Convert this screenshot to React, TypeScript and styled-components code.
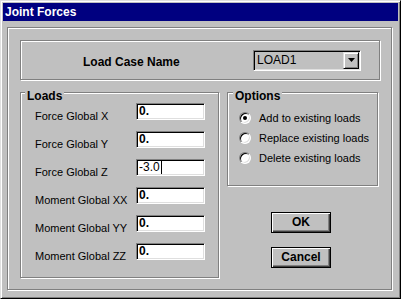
import React from 'react';
import styled, { createGlobalStyle } from 'styled-components';

const GlobalStyle = createGlobalStyle`
  html, body { margin: 0; padding: 0; background: #c0c0c0; }
  body { font-family: "Liberation Sans", Arial, sans-serif; }
  * { box-sizing: border-box; }
`;

const FONT = `"Liberation Sans", Arial, sans-serif`;

const Window = styled.div`
  width: 401px;
  height: 299px;
  background: #c0c0c0;
  border: 1px solid;
  border-color: #dfdfdf #000 #000 #dfdfdf;
  box-shadow: inset 1px 1px #fff, inset -1px -1px #808080;
  padding: 2px;
  display: flex;
  flex-direction: column;
`;

const TitleBar = styled.div`
  height: 18px;
  background: #000080;
  color: #fff;
  font: bold 12px/18px ${FONT};
  padding-left: 2px;
`;

const Body = styled.div`
  flex: 1;
  display: flex;
  padding: 6px 6px 6px 4px;
  min-height: 0;
`;

const Frame = styled.div`
  flex: 1;
  border: 1px solid #808080;
  box-shadow: inset 1px 1px #fff, 1px 1px #fff;
  padding: 12px 11px 0 12px;
  display: flex;
  flex-direction: column;
`;

const CaseGroup = styled.div`
  height: 40px;
  border: 1px solid #808080;
  box-shadow: inset 1px 1px #fff, 1px 1px #fff;
  display: flex;
  align-items: center;
  justify-content: space-between;
  padding: 0 18px 0 62px;
`;

const CaseLabel = styled.div`
  font: bold 12px/14px ${FONT};
  color: #000;
  margin-top: 3px;
`;

const Combo = styled.div`
  width: 108px;
  height: 21px;
  border: 1px solid;
  border-color: #808080 #fff #fff #808080;
  box-shadow: inset 1px 1px #000, inset -1px -1px #dfdfdf;
  padding: 1px;
  display: flex;
  align-items: stretch;
`;

const ComboText = styled.div`
  flex: 1;
  font: 12px/17px ${FONT};
  color: #000;
  padding-left: 2px;
`;

const ComboButton = styled.div`
  width: 16px;
  border: 1px solid;
  border-color: #dfdfdf #000 #000 #dfdfdf;
  box-shadow: inset 1px 1px #fff, inset -1px -1px #808080;
  display: flex;
  align-items: center;
  justify-content: center;
`;

const Row = styled.div`
  display: flex;
  gap: 8px;
  margin-top: 12px;
`;

const Group = styled.div<{ $w: number; $h: number }>`
  width: ${p => p.$w}px;
  height: ${p => p.$h}px;
  border: 1px solid #808080;
  box-shadow: inset 1px 1px #fff, 1px 1px #fff;
  display: flex;
  flex-direction: column;
`;

const Legend = styled.div<{ $ml: number }>`
  align-self: flex-start;
  margin: -4px 0 0 ${p => p.$ml}px;
  padding: 0 2px;
  background: #c0c0c0;
  font: bold 12px/14px ${FONT};
  color: #000;
`;

const FieldGrid = styled.div`
  display: grid;
  grid-template-columns: 1fr 69px;
  grid-auto-rows: 28px;
  padding: 0 13px 0 14px;
`;

const FieldLabel = styled.div`
  font: 11px/13px ${FONT};
  color: #000;
  margin-top: 7px;
  white-space: nowrap;
`;

const Field = styled.div<{ $bold?: boolean }>`
  height: 17px;
  background: #fff;
  border: 1px solid;
  border-color: #808080 #fff #fff #808080;
  box-shadow: inset 1px 1px #000, inset -1px -1px #dfdfdf;
  padding-left: 2px;
  font: ${p => (p.$bold ? 'bold' : 'normal')} 12px/15px ${FONT};
  color: #000;
  display: flex;
  align-items: center;
`;

const Caret = styled.span`
  display: inline-block;
  width: 1px;
  height: 13px;
  background: #000;
  margin-left: 1px;
`;

const RightCol = styled.div`
  width: 151px;
  display: flex;
  flex-direction: column;
`;

const RadioList = styled.div`
  display: flex;
  flex-direction: column;
  padding: 5px 0 0 11px;
`;

const RadioRow = styled.div`
  height: 20px;
  display: flex;
  align-items: center;
  gap: 8px;
`;

const RadioCircle = styled.div<{ $on?: boolean }>`
  width: 12px;
  height: 12px;
  border-radius: 50%;
  background: #fff;
  border: 1px solid;
  border-color: #808080 #fff #fff #808080;
  box-shadow: inset 1px 1px #000, inset -1px -1px #dfdfdf;
  display: flex;
  align-items: center;
  justify-content: center;
  &::after {
    content: '';
    display: ${p => (p.$on ? 'block' : 'none')};
    width: 4px;
    height: 4px;
    border-radius: 50%;
    background: #000;
  }
`;

const RadioLabel = styled.div`
  font: 11px/13px ${FONT};
  color: #000;
  white-space: nowrap;
`;

const Buttons = styled.div`
  display: flex;
  flex-direction: column;
  align-items: center;
  padding-right: 3px;
  margin-top: 26px;
  gap: 14px;
`;

const Button = styled.div`
  width: 60px;
  height: 21px;
  border: 1px solid #000;
  box-shadow: inset 1px 1px #fff, inset -1px -1px #404040, inset -2px -2px #808080;
  font: bold 12px/19px ${FONT};
  color: #000;
  text-align: center;
`;

const loads: { label: string; value: string; bold?: boolean; caret?: boolean }[] = [
  { label: 'Force Global X', value: '0.', bold: true },
  { label: 'Force Global Y', value: '0.', bold: true },
  { label: 'Force Global Z', value: '-3.0', caret: true },
  { label: 'Moment Global XX', value: '0.', bold: true },
  { label: 'Moment Global YY', value: '0.', bold: true },
  { label: 'Moment Global ZZ', value: '0.', bold: true },
];

const options = [
  { label: 'Add to existing loads', on: true },
  { label: 'Replace existing loads', on: false },
  { label: 'Delete existing loads', on: false },
];

export default function App() {
  return (
    <>
      <GlobalStyle />
      <Window>
        <TitleBar>Joint Forces</TitleBar>
        <Body>
          <Frame>
            <CaseGroup>
              <CaseLabel>Load Case Name</CaseLabel>
              <Combo>
                <ComboText>LOAD1</ComboText>
                <ComboButton>
                  <svg width="7" height="4" viewBox="0 0 7 4">
                    <polygon points="0,0 7,0 3.5,4" fill="#000" />
                  </svg>
                </ComboButton>
              </Combo>
            </CaseGroup>
            <Row>
              <Group $w={199} $h={186}>
                <Legend $ml={4}>Loads</Legend>
                <FieldGrid>
                  {loads.map(l => (
                    <React.Fragment key={l.label}>
                      <FieldLabel>{l.label}</FieldLabel>
                      <Field $bold={l.bold}>
                        {l.value}
                        {l.caret && <Caret />}
                      </Field>
                    </React.Fragment>
                  ))}
                </FieldGrid>
              </Group>
              <RightCol>
                <Group $w={151} $h={94}>
                  <Legend $ml={5}>Options</Legend>
                  <RadioList>
                    {options.map(o => (
                      <RadioRow key={o.label}>
                        <RadioCircle $on={o.on} />
                        <RadioLabel>{o.label}</RadioLabel>
                      </RadioRow>
                    ))}
                  </RadioList>
                </Group>
                <Buttons>
                  <Button>OK</Button>
                  <Button>Cancel</Button>
                </Buttons>
              </RightCol>
            </Row>
          </Frame>
        </Body>
      </Window>
    </>
  );
}
